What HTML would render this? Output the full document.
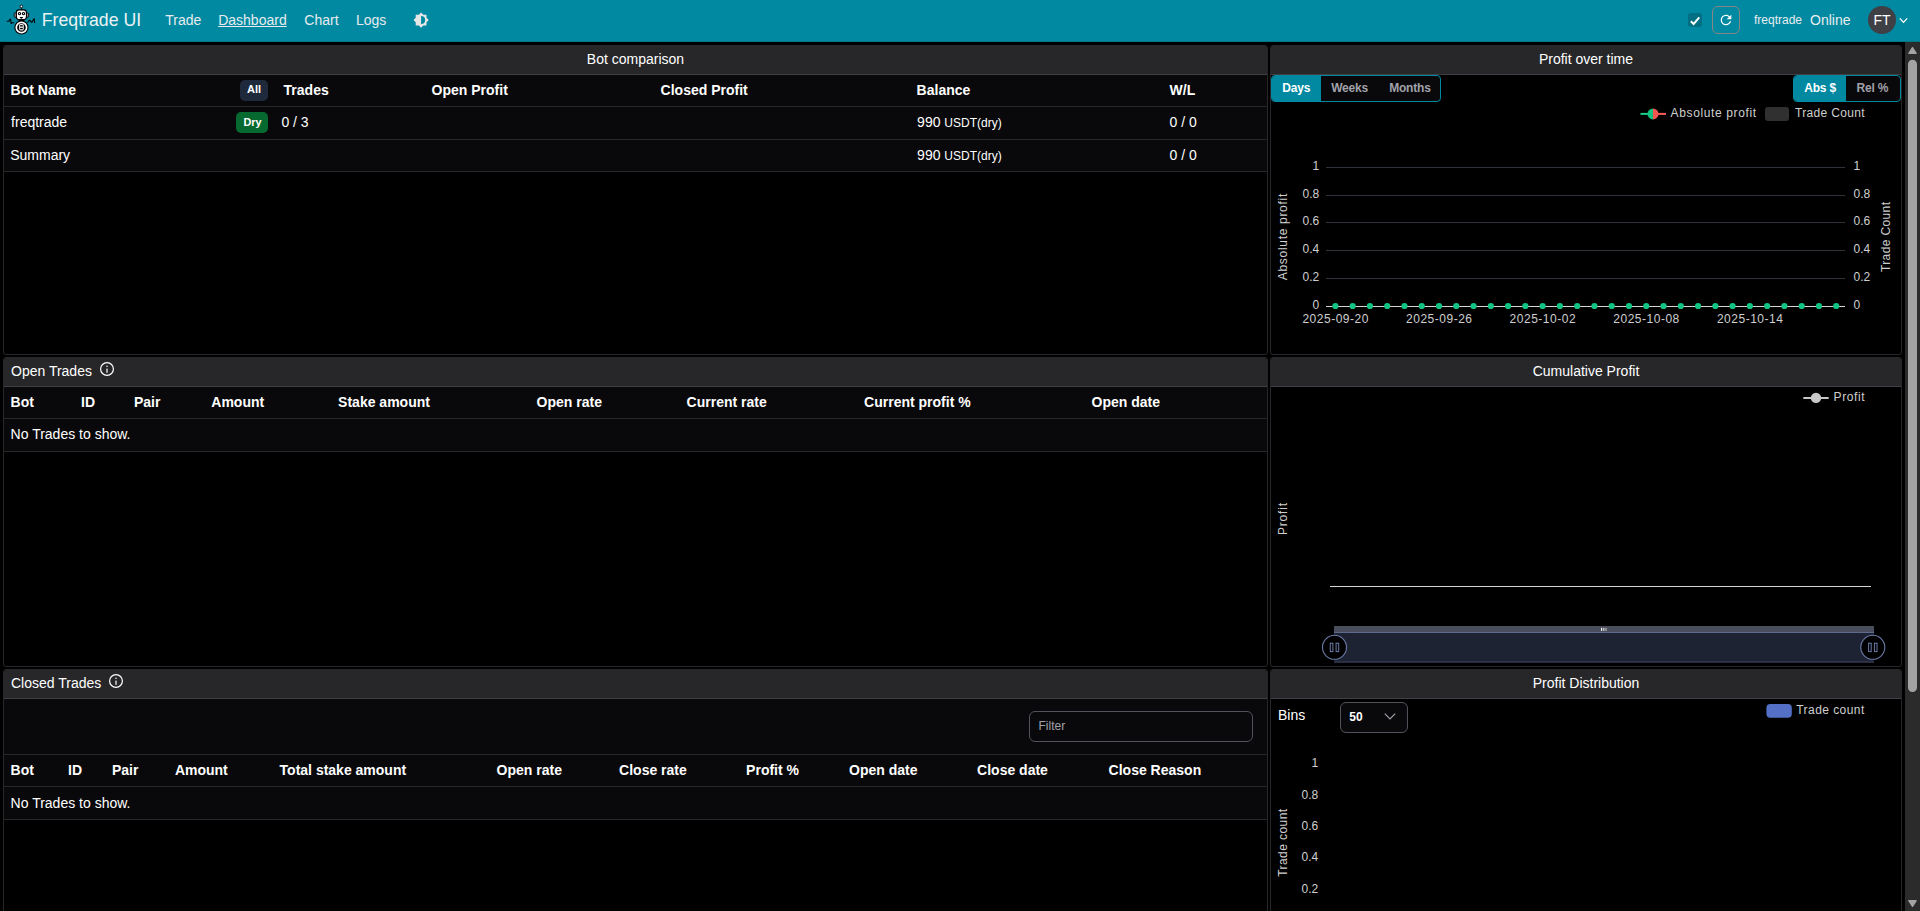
<!DOCTYPE html>
<html><head><meta charset="utf-8"><title>Freqtrade UI</title>
<style>
html,body{margin:0;padding:0;}
body{width:1920px;height:911px;overflow:hidden;background:#000;position:relative;font-family:"Liberation Sans",sans-serif;color:#fff;}
.a{position:absolute;}
.t{position:absolute;white-space:nowrap;line-height:1;}
.b{font-weight:700;}
.card{position:absolute;box-sizing:border-box;border:1px solid #27272a;border-radius:3px;background:#000;overflow:hidden;}
.ch{position:absolute;left:0;right:0;top:0;height:29px;box-sizing:border-box;background:#27272a;border-bottom:1px solid #3f3f46;}
.tb{position:absolute;background:#09090b;}
.hl{position:absolute;height:1px;background:#27272a;}
.f14{font-size:14px;}
.f12{font-size:12px;}
</style></head><body>

<!-- NAVBAR -->
<div class="a" style="left:0;top:0;width:1920px;height:42px;background:#0089a1;"></div>
<div class="a" style="left:0;top:41px;width:1920px;height:1px;background:#00758a;"></div>
<svg class="a" style="left:4px;top:2px" width="36" height="36" viewBox="0 0 36 36">
 <path d="M3.1 19.3 L5 19.1 Q6.2 15.6 6.8 18.4 Q6.5 23 8.2 20.7 L9.8 20.7" fill="none" stroke="#000" stroke-width="1.1" stroke-linejoin="round" stroke-linecap="round"/>
 <path d="M23.8 20.4 Q24.6 18.4 25.6 18.3 Q26.6 18.4 26.8 19.6 Q27.4 20.6 28.4 19.8 Q29.4 16.6 30.3 16.8 Q30 19.6 30.7 20.6" fill="none" stroke="#000" stroke-width="1.1" stroke-linejoin="round" stroke-linecap="round"/>
 <line x1="17.4" y1="5.4" x2="17.4" y2="8.2" stroke="#000" stroke-width="1"/>
 <circle cx="17.4" cy="4.4" r="1.3" fill="#fff" stroke="#000" stroke-width="0.9"/>
 <rect x="10.2" y="11" width="2.4" height="4.2" rx="0.6" fill="#8c8c8c" stroke="#000" stroke-width="0.8"/>
 <rect x="22.2" y="11" width="2.4" height="4.2" rx="0.6" fill="#8c8c8c" stroke="#000" stroke-width="0.8"/>
 <rect x="12.4" y="7.9" width="10" height="9.8" rx="2.6" fill="#fff" stroke="#000" stroke-width="1.1"/>
 <circle cx="15.5" cy="11.6" r="1.15" fill="#fff" stroke="#000" stroke-width="1.1"/>
 <circle cx="19.5" cy="11.6" r="1.15" fill="#fff" stroke="#000" stroke-width="1.1"/>
 <path d="M15.6 15.1 L19.2 15.1 Q18.6 16.8 17.4 16.8 Q16.2 16.8 15.6 15.1Z" fill="#000"/>
 <rect x="14.8" y="17.2" width="5.3" height="3" fill="#000"/>
 <circle cx="17.45" cy="25.45" r="7.1" fill="#000"/>
 <circle cx="17.45" cy="25.45" r="5.15" fill="none" stroke="#fff" stroke-width="1.7"/>
 <rect x="15.1" y="22.1" width="4.7" height="6.3" rx="1.4" fill="#e8e8e8"/>
 <rect x="16.1" y="23.2" width="2.7" height="1.3" fill="#000"/>
 <rect x="16.1" y="25.9" width="2.7" height="1.3" fill="#000"/>
</svg>
<div class="t" style="left:41.8px;top:12px;font-size:17.7px;color:#eef2f4;">Freqtrade UI</div>
<div class="t f14" style="left:165.3px;top:13px;color:#e8ecee;">Trade</div>
<div class="t f14" style="left:218.2px;top:13px;color:#e8ecee;text-decoration:underline;">Dashboard</div>
<div class="t f14" style="left:304.3px;top:13px;color:#e8ecee;">Chart</div>
<div class="t f14" style="left:355.9px;top:13px;color:#e8ecee;">Logs</div>
<svg class="a" style="left:413.3px;top:12.2px" width="16.2" height="16.2" viewBox="0 0 24 24"><path fill="#e6e6e6" fill-rule="evenodd" d="M12,18V6A6,6 0 0,1 18,12A6,6 0 0,1 12,18M20,15.31L23.31,12L20,8.69V4H15.31L12,0.69L8.69,4H4V8.69L0.69,12L4,15.31V20H8.69L12,23.31L15.31,20H20V15.31Z"/></svg>
<div class="a" style="left:1688px;top:13px;width:14px;height:14px;border-radius:3px;background:#006e83;"></div>
<svg class="a" style="left:1688px;top:13px" width="14" height="14" viewBox="0 0 14 14"><path d="M2.8 8.3 L5.6 11 L11.3 4.4" fill="none" stroke="#fff" stroke-width="2"/></svg>
<div class="a" style="left:1712px;top:6px;width:28px;height:28px;box-sizing:border-box;border:1px solid #8a8585;border-radius:6px;"></div>
<svg class="a" style="left:1718.3px;top:12.4px" width="16" height="16" viewBox="0 0 24 24"><path fill="#fff" d="M17.65,6.35C16.2,4.9 14.21,4 12,4A8,8 0 0,0 4,12A8,8 0 0,0 12,20C15.73,20 18.84,17.45 19.73,14H17.65C16.83,16.33 14.61,18 12,18A6,6 0 0,1 6,12A6,6 0 0,1 12,6C13.66,6 15.14,6.69 16.22,7.78L13,11H20V4L17.65,6.35Z"/></svg>
<div class="t f12" style="left:1754px;top:14px;color:#e8ecee;">freqtrade</div>
<div class="t f14" style="left:1810px;top:12.5px;color:#e8ecee;">Online</div>
<div class="a" style="left:1868px;top:6px;width:28px;height:28px;border-radius:50%;background:#3f3f46;"></div>
<div class="t f14" style="left:1868px;width:28px;text-align:center;top:13px;color:#fff;">FT</div>
<svg class="a" style="left:1898px;top:16px" width="11" height="9" viewBox="0 0 11 9"><path d="M1.8 2.4 L5.5 6.4 L9.2 2.4" fill="none" stroke="#fff" stroke-width="1.3"/></svg>

<!-- SCROLLBAR -->
<div class="a" style="left:1905px;top:42px;width:15px;height:869px;background:#2b2b2b;"></div>

<!-- CARDS -->
<div class="card" style="left:3px;top:45px;width:1265px;height:310px;"><div class="ch"></div></div>
<div class="card" style="left:1270px;top:45px;width:632px;height:310px;"><div class="ch"></div></div>
<div class="card" style="left:3px;top:357px;width:1265px;height:310px;"><div class="ch"></div></div>
<div class="card" style="left:1270px;top:357px;width:632px;height:310px;"><div class="ch"></div></div>
<div class="card" style="left:3px;top:669px;width:1265px;height:320px;"><div class="ch"></div></div>
<div class="card" style="left:1270px;top:669px;width:632px;height:320px;"><div class="ch"></div></div>

<!-- card titles -->
<div class="t f14" style="left:3px;width:1265px;text-align:center;top:52px;">Bot comparison</div>
<div class="t f14" style="left:1270px;width:632px;text-align:center;top:52px;">Profit over time</div>
<div class="t f14" style="left:11px;top:364px;">Open Trades</div>
<div class="t f14" style="left:1270px;width:632px;text-align:center;top:364px;">Cumulative Profit</div>
<div class="t f14" style="left:11px;top:676px;">Closed Trades</div>
<div class="t f14" style="left:1270px;width:632px;text-align:center;top:676px;">Profit Distribution</div>


<!-- C1 table -->
<div class="tb" style="left:4px;top:75px;width:1263px;height:97px;"></div>
<div class="hl" style="left:4px;top:106px;width:1263px;"></div>
<div class="hl" style="left:4px;top:139px;width:1263px;"></div>
<div class="hl" style="left:4px;top:171px;width:1263px;"></div>
<div class="t f14 b" style="left:10.6px;top:83px;">Bot Name</div>
<div class="a" style="left:240px;top:80px;width:28px;height:21px;border-radius:5px;background:#1e293b;"></div>
<div class="t b" style="left:240px;width:28px;text-align:center;top:84px;font-size:11px;">All</div>
<div class="t f14 b" style="left:283.6px;top:83px;">Trades</div>
<div class="t f14 b" style="left:431.6px;top:83px;">Open Profit</div>
<div class="t f14 b" style="left:660.6px;top:83px;">Closed Profit</div>
<div class="t f14 b" style="left:916.6px;top:83px;">Balance</div>
<div class="t f14 b" style="left:1169.6px;top:83px;">W/L</div>
<div class="t f14" style="left:11.1px;top:115px;">freqtrade</div>
<div class="a" style="left:236px;top:112px;width:32px;height:21px;border-radius:5px;background:#066a30;"></div>
<div class="t b" style="left:236.5px;width:32px;text-align:center;top:117px;font-size:10.8px;">Dry</div>
<div class="t f14" style="left:281.4px;top:115px;">0 / 3</div>
<div class="t f14" style="left:917.1px;top:115px;">990 <span style="font-size:12px">USDT(dry)</span></div>
<div class="t f14" style="left:1169.6px;top:115px;">0 / 0</div>
<div class="t f14" style="left:10.2px;top:148px;">Summary</div>
<div class="t f14" style="left:917.1px;top:148px;">990 <span style="font-size:12px">USDT(dry)</span></div>
<div class="t f14" style="left:1169.6px;top:148px;">0 / 0</div>

<!-- C3 table -->
<div class="tb" style="left:4px;top:387px;width:1263px;height:65px;"></div>
<div class="hl" style="left:4px;top:418px;width:1263px;"></div>
<div class="hl" style="left:4px;top:451px;width:1263px;"></div>
<div class="t f14 b" style="left:10.6px;top:395px;">Bot</div>
<div class="t f14 b" style="left:81.1px;top:395px;">ID</div>
<div class="t f14 b" style="left:133.9px;top:395px;">Pair</div>
<div class="t f14 b" style="left:211.3px;top:395px;">Amount</div>
<div class="t f14 b" style="left:338.1px;top:395px;">Stake amount</div>
<div class="t f14 b" style="left:536.6px;top:395px;">Open rate</div>
<div class="t f14 b" style="left:686.6px;top:395px;">Current rate</div>
<div class="t f14 b" style="left:864.1px;top:395px;">Current profit %</div>
<div class="t f14 b" style="left:1091.6px;top:395px;">Open date</div>
<div class="t f14" style="left:10.6px;top:427px;">No Trades to show.</div>

<!-- C5 table -->
<div class="tb" style="left:4px;top:699px;width:1263px;height:121px;"></div>
<div class="hl" style="left:4px;top:754px;width:1263px;"></div>
<div class="hl" style="left:4px;top:786px;width:1263px;"></div>
<div class="hl" style="left:4px;top:819px;width:1263px;"></div>
<div class="a" style="left:1029px;top:711px;width:224px;height:31px;box-sizing:border-box;border:1px solid #52525b;border-radius:6px;background:#09090b;"></div>
<div class="t f12" style="left:1038.5px;top:720px;color:#a1a1aa;">Filter</div>
<div class="t f14 b" style="left:10.6px;top:763px;">Bot</div>
<div class="t f14 b" style="left:68.1px;top:763px;">ID</div>
<div class="t f14 b" style="left:111.9px;top:763px;">Pair</div>
<div class="t f14 b" style="left:174.9px;top:763px;">Amount</div>
<div class="t f14 b" style="left:279.6px;top:763px;">Total stake amount</div>
<div class="t f14 b" style="left:496.6px;top:763px;">Open rate</div>
<div class="t f14 b" style="left:619.1px;top:763px;">Close rate</div>
<div class="t f14 b" style="left:746.1px;top:763px;">Profit %</div>
<div class="t f14 b" style="left:849.1px;top:763px;">Open date</div>
<div class="t f14 b" style="left:977.1px;top:763px;">Close date</div>
<div class="t f14 b" style="left:1108.6px;top:763px;">Close Reason</div>
<div class="t f14" style="left:10.6px;top:796px;">No Trades to show.</div>

<!-- info icons -->
<svg class="a" style="left:100.4px;top:362.2px" width="14" height="14" viewBox="0 0 14 14"><circle cx="7" cy="7" r="6.4" fill="none" stroke="#fff" stroke-width="1.2"/><circle cx="7" cy="4.3" r="0.75" fill="#fff"/><rect x="6.4" y="6.6" width="1.2" height="4.2" fill="#fff"/></svg>
<svg class="a" style="left:109.4px;top:674.3px" width="14" height="14" viewBox="0 0 14 14"><circle cx="7" cy="7" r="6.4" fill="none" stroke="#fff" stroke-width="1.2"/><circle cx="7" cy="4.3" r="0.75" fill="#fff"/><rect x="6.4" y="6.6" width="1.2" height="4.2" fill="#fff"/></svg>

<!-- C2 controls -->
<div class="a" style="left:1271px;top:75px;width:170px;height:27px;box-sizing:border-box;border:1px solid #0089a1;border-radius:4px;background:#09090b;overflow:hidden;">
 <div class="a" style="left:-1px;top:-1px;width:50px;height:27px;background:#0089a1;"></div>
</div>
<div class="t b" style="left:1282.3px;top:82px;font-size:12px;letter-spacing:-0.2px;color:#fff;">Days</div>
<div class="t b" style="left:1331.2px;top:82px;font-size:12px;letter-spacing:-0.2px;color:#a1a1aa;">Weeks</div>
<div class="t b" style="left:1389.2px;top:82px;font-size:12px;letter-spacing:-0.2px;color:#a1a1aa;">Months</div>
<div class="a" style="left:1793px;top:75px;width:108px;height:27px;box-sizing:border-box;border:1px solid #0089a1;border-radius:4px;background:#09090b;overflow:hidden;">
 <div class="a" style="left:-1px;top:-1px;width:53px;height:27px;background:#0089a1;"></div>
</div>
<div class="t b" style="left:1804.2px;top:82px;font-size:12px;letter-spacing:-0.2px;color:#fff;">Abs $</div>
<div class="t b" style="left:1856.5px;top:82px;font-size:12px;letter-spacing:-0.2px;color:#a1a1aa;">Rel %</div>

<svg class="a" style="left:1271px;top:102px" width="630" height="252" viewBox="1271 102 630 252">
<line x1="1640.5" y1="113.9" x2="1653" y2="113.9" stroke="#14d08a" stroke-width="2"/>
<line x1="1653" y1="113.9" x2="1666" y2="113.9" stroke="#fb5b58" stroke-width="2"/>
<path d="M1653 108.4 A5.5 5.5 0 0 0 1653 119.4 Z" fill="#12c07f"/>
<path d="M1653 108.4 A5.5 5.5 0 0 1 1653 119.4 Z" fill="#f0554f"/>
<text x="1670.6" y="117" fill="#cfcfcf" font-family="Liberation Sans" font-size="12" textLength="85.5" lengthAdjust="spacing">Absolute profit</text>
<rect x="1765" y="107" width="24" height="14" rx="3" fill="#303030"/>
<text x="1795" y="117" fill="#cfcfcf" font-family="Liberation Sans" font-size="12" textLength="69.5" lengthAdjust="spacing">Trade Count</text>
<line x1="1326" y1="167.5" x2="1845" y2="167.5" stroke="#2e323b" stroke-width="1"/>
<line x1="1326" y1="195.5" x2="1845" y2="195.5" stroke="#2e323b" stroke-width="1"/>
<line x1="1326" y1="222.5" x2="1845" y2="222.5" stroke="#2e323b" stroke-width="1"/>
<line x1="1326" y1="250.5" x2="1845" y2="250.5" stroke="#2e323b" stroke-width="1"/>
<line x1="1326" y1="278.5" x2="1845" y2="278.5" stroke="#2e323b" stroke-width="1"/>
<line x1="1326" y1="306.5" x2="1845" y2="306.5" stroke="#d6d6d6" stroke-width="1.2"/>
<circle cx="1335.40" cy="306" r="3.1" fill="#12c483"/>
<circle cx="1352.67" cy="306" r="3.1" fill="#12c483"/>
<circle cx="1369.94" cy="306" r="3.1" fill="#12c483"/>
<circle cx="1387.21" cy="306" r="3.1" fill="#12c483"/>
<circle cx="1404.48" cy="306" r="3.1" fill="#12c483"/>
<circle cx="1421.75" cy="306" r="3.1" fill="#12c483"/>
<circle cx="1439.02" cy="306" r="3.1" fill="#12c483"/>
<circle cx="1456.29" cy="306" r="3.1" fill="#12c483"/>
<circle cx="1473.56" cy="306" r="3.1" fill="#12c483"/>
<circle cx="1490.83" cy="306" r="3.1" fill="#12c483"/>
<circle cx="1508.10" cy="306" r="3.1" fill="#12c483"/>
<circle cx="1525.37" cy="306" r="3.1" fill="#12c483"/>
<circle cx="1542.64" cy="306" r="3.1" fill="#12c483"/>
<circle cx="1559.91" cy="306" r="3.1" fill="#12c483"/>
<circle cx="1577.18" cy="306" r="3.1" fill="#12c483"/>
<circle cx="1594.45" cy="306" r="3.1" fill="#12c483"/>
<circle cx="1611.72" cy="306" r="3.1" fill="#12c483"/>
<circle cx="1628.99" cy="306" r="3.1" fill="#12c483"/>
<circle cx="1646.26" cy="306" r="3.1" fill="#12c483"/>
<circle cx="1663.53" cy="306" r="3.1" fill="#12c483"/>
<circle cx="1680.80" cy="306" r="3.1" fill="#12c483"/>
<circle cx="1698.07" cy="306" r="3.1" fill="#12c483"/>
<circle cx="1715.34" cy="306" r="3.1" fill="#12c483"/>
<circle cx="1732.61" cy="306" r="3.1" fill="#12c483"/>
<circle cx="1749.88" cy="306" r="3.1" fill="#12c483"/>
<circle cx="1767.15" cy="306" r="3.1" fill="#12c483"/>
<circle cx="1784.42" cy="306" r="3.1" fill="#12c483"/>
<circle cx="1801.69" cy="306" r="3.1" fill="#12c483"/>
<circle cx="1818.96" cy="306" r="3.1" fill="#12c483"/>
<circle cx="1836.23" cy="306" r="3.1" fill="#12c483"/>
<text x="1319.3" y="170.1" fill="#cfcfcf" font-family="Liberation Sans" font-size="12" text-anchor="end">1</text>
<text x="1853.5" y="170.1" fill="#cfcfcf" font-family="Liberation Sans" font-size="12">1</text>
<text x="1319.3" y="198.1" fill="#cfcfcf" font-family="Liberation Sans" font-size="12" text-anchor="end">0.8</text>
<text x="1853.5" y="198.1" fill="#cfcfcf" font-family="Liberation Sans" font-size="12">0.8</text>
<text x="1319.3" y="225.1" fill="#cfcfcf" font-family="Liberation Sans" font-size="12" text-anchor="end">0.6</text>
<text x="1853.5" y="225.1" fill="#cfcfcf" font-family="Liberation Sans" font-size="12">0.6</text>
<text x="1319.3" y="253.1" fill="#cfcfcf" font-family="Liberation Sans" font-size="12" text-anchor="end">0.4</text>
<text x="1853.5" y="253.1" fill="#cfcfcf" font-family="Liberation Sans" font-size="12">0.4</text>
<text x="1319.3" y="281.1" fill="#cfcfcf" font-family="Liberation Sans" font-size="12" text-anchor="end">0.2</text>
<text x="1853.5" y="281.1" fill="#cfcfcf" font-family="Liberation Sans" font-size="12">0.2</text>
<text x="1319.3" y="309.1" fill="#cfcfcf" font-family="Liberation Sans" font-size="12" text-anchor="end">0</text>
<text x="1853.5" y="309.1" fill="#cfcfcf" font-family="Liberation Sans" font-size="12">0</text>
<text x="1302.4" y="323" fill="#cfcfcf" font-family="Liberation Sans" font-size="12" textLength="66" lengthAdjust="spacing">2025-09-20</text>
<text x="1406.0" y="323" fill="#cfcfcf" font-family="Liberation Sans" font-size="12" textLength="66" lengthAdjust="spacing">2025-09-26</text>
<text x="1509.6" y="323" fill="#cfcfcf" font-family="Liberation Sans" font-size="12" textLength="66" lengthAdjust="spacing">2025-10-02</text>
<text x="1613.3" y="323" fill="#cfcfcf" font-family="Liberation Sans" font-size="12" textLength="66" lengthAdjust="spacing">2025-10-08</text>
<text x="1716.9" y="323" fill="#cfcfcf" font-family="Liberation Sans" font-size="12" textLength="66" lengthAdjust="spacing">2025-10-14</text>
<text transform="translate(1287.2 237) rotate(-90)" fill="#cfcfcf" font-family="Liberation Sans" font-size="12" text-anchor="middle" textLength="86.5" lengthAdjust="spacing">Absolute profit</text>
<text transform="translate(1889.8 237) rotate(-90)" fill="#cfcfcf" font-family="Liberation Sans" font-size="12" text-anchor="middle" textLength="70" lengthAdjust="spacing">Trade Count</text>
</svg>
<svg class="a" style="left:1271px;top:387px" width="630" height="279" viewBox="1271 387 630 279">
<line x1="1803.3" y1="398" x2="1828.7" y2="398" stroke="#c8c8c8" stroke-width="2"/>
<circle cx="1816" cy="397.9" r="5.2" fill="#c8c8c8"/>
<text x="1833.6" y="401" fill="#cfcfcf" font-family="Liberation Sans" font-size="12" textLength="31" lengthAdjust="spacing">Profit</text>
<text transform="translate(1287.2 519) rotate(-90)" fill="#cfcfcf" font-family="Liberation Sans" font-size="12" text-anchor="middle" textLength="32" lengthAdjust="spacing">Profit</text>
<line x1="1330" y1="586.5" x2="1871" y2="586.5" stroke="#d6d6d6" stroke-width="1"/>
<rect x="1334" y="626" width="540" height="6.5" fill="#4a4d5c"/>
<rect x="1334" y="632" width="540" height="1.2" fill="#5e6a8a"/>
<rect x="1334" y="633" width="540" height="29.5" fill="#1e2334"/>
<rect x="1334" y="661.5" width="540" height="1" fill="#3d4660"/>
<rect x="1601" y="627.9" width="1.2" height="3" fill="#fff"/><rect x="1603.2" y="627.9" width="1.2" height="3" fill="#ddd"/><rect x="1605.4" y="627.9" width="1.2" height="3" fill="#bbb"/>
<circle cx="1334.5" cy="647.3" r="12" fill="#000" stroke="#6b7ca8" stroke-width="1.1"/>
<rect x="1330.3" y="643.2" width="2.6" height="8.4" fill="none" stroke="#6b7ca8" stroke-width="1"/>
<rect x="1336.1" y="643.2" width="2.6" height="8.4" fill="none" stroke="#6b7ca8" stroke-width="1"/>
<circle cx="1872.8" cy="647.3" r="12" fill="#000" stroke="#6b7ca8" stroke-width="1.1"/>
<rect x="1868.6" y="643.2" width="2.6" height="8.4" fill="none" stroke="#6b7ca8" stroke-width="1"/>
<rect x="1874.3999999999999" y="643.2" width="2.6" height="8.4" fill="none" stroke="#6b7ca8" stroke-width="1"/>
</svg>

<div class="t f14" style="left:1278px;top:708px;">Bins</div>
<div class="a" style="left:1340px;top:702px;width:68px;height:31px;box-sizing:border-box;border:1px solid #52525b;border-radius:6px;background:#09090b;"></div>
<div class="t b f12" style="left:1349.3px;top:711px;">50</div>
<svg class="a" style="left:1380px;top:708px" width="20" height="16" viewBox="0 0 20 16"><path d="M4.8 5.7 L10 11 L15.2 5.7" fill="none" stroke="#a1a1aa" stroke-width="1.2"/></svg>

<svg class="a" style="left:1271px;top:699px" width="630" height="212" viewBox="1271 699 630 212">
<rect x="1766.4" y="704" width="25.4" height="13.8" rx="4" fill="#5470c6"/>
<text x="1796.3" y="714.3" fill="#cfcfcf" font-family="Liberation Sans" font-size="12" textLength="68" lengthAdjust="spacing">Trade count</text>
<text x="1318.2" y="766.9" fill="#cfcfcf" font-family="Liberation Sans" font-size="12" text-anchor="end">1</text>
<text x="1318.2" y="798.9" fill="#cfcfcf" font-family="Liberation Sans" font-size="12" text-anchor="end">0.8</text>
<text x="1318.2" y="829.8" fill="#cfcfcf" font-family="Liberation Sans" font-size="12" text-anchor="end">0.6</text>
<text x="1318.2" y="860.7" fill="#cfcfcf" font-family="Liberation Sans" font-size="12" text-anchor="end">0.4</text>
<text x="1318.2" y="892.7" fill="#cfcfcf" font-family="Liberation Sans" font-size="12" text-anchor="end">0.2</text>
<text transform="translate(1287.2 842.8) rotate(-90)" fill="#cfcfcf" font-family="Liberation Sans" font-size="12" text-anchor="middle" textLength="68" lengthAdjust="spacing">Trade count</text>
</svg>

<svg class="a" style="left:1905px;top:42px" width="15" height="869" viewBox="0 0 15 869">
 <path d="M3.8 11.3 L7.5 5.6 L11.2 11.3 Z" fill="#a3a3a3" stroke="#a3a3a3" stroke-width="1.3" stroke-linejoin="round"/>
 <rect x="3" y="17.8" width="9" height="632.2" rx="4.5" fill="#a3a3a3"/>
 <path d="M3.8 858.7 L7.5 864.4 L11.2 858.7 Z" fill="#a3a3a3" stroke="#a3a3a3" stroke-width="1.3" stroke-linejoin="round"/>
</svg>

</body></html>
